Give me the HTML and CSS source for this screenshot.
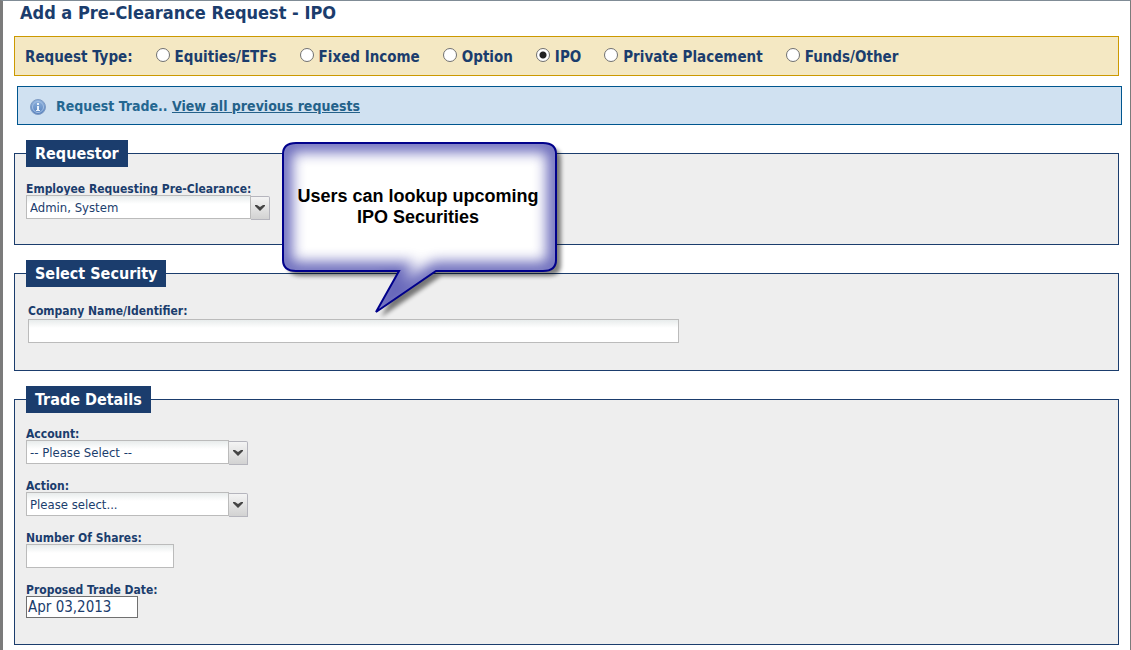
FILE: index.html
```html
<!DOCTYPE html>
<html lang="en">
<head>
	<meta charset="UTF-8" />
	<title>Add a Pre-Clearance Request - IPO</title>
	<link rel="stylesheet" href="styles.css">
</head>
<body>
	<form class="page" onsubmit="return false;">
		<h1>Add a Pre-Clearance Request - IPO</h1>

		<!--request type-->
		<div class="types" role="radiogroup" aria-labelledby="type-title">
			<span class="types-title" id="type-title">Request Type:</span>
			<label><input type="radio" name="type"> Equities/ETFs</label>
			<label><input type="radio" name="type"> Fixed Income</label>
			<label><input type="radio" name="type"> Option</label>
			<label><input type="radio" name="type" checked> IPO</label>
			<label><input type="radio" name="type"> Private Placement</label>
			<label><input type="radio" name="type"> Funds/Other</label>
		</div>

		<div class="info">
			<svg class="info-icon" width="16" height="16" viewBox="0 0 16 16" aria-hidden="true">
				<defs>
					<linearGradient id="ball" x1="0" y1="0" x2="0" y2="1">
						<stop offset="0" stop-color="#8fb3de"/>
						<stop offset="1" stop-color="#5580bd"/>
					</linearGradient>
				</defs>
				<circle cx="8" cy="8" r="7.5" fill="url(#ball)" stroke="#7f9bc4"/>
				<circle cx="8" cy="8" r="5.5" fill="none" stroke="#a5c0e4"/>
				<path d="M7 4h2v2H7zM7 7h2v4h1v1H6v-1h1z" fill="#e8f1fb"/>
			</svg>
			<span>Request Trade.. <a href="#">View all previous requests</a></span>
		</div>

		<fieldset>
			<legend>Requestor</legend>
			<div class="field">
				<label for="employee">Employee Requesting Pre-Clearance:</label>
				<div class="combo">
					<select id="employee" class="wide"><option>Admin, System</option></select>
					<span class="arrow"><svg width="10" height="6" viewBox="0 0 10 6"><path d="M0 0h2l3 2 3-2h2v1L5 6 0 1z"/></svg></span>
				</div>
			</div>
		</fieldset>

		<fieldset>
			<legend>Select Security</legend>
			<div class="field security">
				<label for="company">Company Name/Identifier:</label>
				<input type="text" id="company" class="company">
			</div>
		</fieldset>

		<fieldset>
			<legend>Trade Details</legend>
			<div class="field">
				<label for="account">Account:</label>
				<div class="combo">
					<select id="account"><option>-- Please Select --</option></select>
					<span class="arrow"><svg width="10" height="6" viewBox="0 0 10 6"><path d="M0 0h2l3 2 3-2h2v1L5 6 0 1z"/></svg></span>
				</div>
			</div>
			<div class="field">
				<label for="action">Action:</label>
				<div class="combo">
					<select id="action"><option>Please select...</option></select>
					<span class="arrow"><svg width="10" height="6" viewBox="0 0 10 6"><path d="M0 0h2l3 2 3-2h2v1L5 6 0 1z"/></svg></span>
				</div>
			</div>
			<div class="field">
				<label for="shares">Number Of Shares:</label>
				<input type="text" id="shares" class="shares">
			</div>
			<div class="field">
				<label for="date">Proposed Trade Date:</label>
				<input type="text" id="date" class="date" value="Apr 03,2013">
			</div>
		</fieldset>
	</form>

	<!--help bubble-->
	<div class="callout">
		<svg width="290" height="185" viewBox="0 0 290 185" aria-hidden="true">
			<defs>
				<path id="bubble" d="M15 2H262Q275 2 275 13V119Q275 130 262 130H155L95 171L118 130H15Q2 130 2 119V13Q2 2 15 2Z"/>
				<clipPath id="inside"><use href="#bubble"/></clipPath>
				<filter id="glow" x="-20%" y="-20%" width="140%" height="140%"><feGaussianBlur stdDeviation="7"/></filter>
				<filter id="shade" x="-20%" y="-20%" width="140%" height="140%"><feGaussianBlur stdDeviation="2"/></filter>
			</defs>
			<use href="#bubble" x="5" y="5" fill="#000" opacity=".5" filter="url(#shade)"/>
			<use href="#bubble" fill="#fff"/>
			<g clip-path="url(#inside)">
				<use href="#bubble" fill="none" stroke="#00008b" stroke-width="18" opacity=".6" filter="url(#glow)"/>
			</g>
			<use href="#bubble" fill="none" stroke="#00008b" stroke-width="2"/>
		</svg>
		<p>Users can lookup upcoming<br>IPO Securities</p>
	</div>
</body>
</html>
```

FILE: styles.css
```css
* {
	box-sizing: border-box;
}
body {
	margin: 0;
	position: relative;
	font-family: "DejaVu Sans Condensed", Tahoma, sans-serif;
	font-size: 12px;
	color: #1b3d6d;
	background: #fff;
}
.page {
	min-height: 100vh;
	border: 1px solid #7b7b7b;
	border-top-color: #808c96;
	border-bottom: 0;
	border-left-width: 3px;
	padding: 0 11px 5px;
}
h1 {
	margin: 0 0 11px 6px;
	font-size: 18px;
	line-height: 24px;
}
.types {
	display: flex;
	align-items: center;
	gap: 23px;
	height: 40px;
	padding: 2px 10px 0;
	border: 1px solid #cc9900;
	background: #f4e8c3;
	font-size: 15px;
	font-weight: bold;
	white-space: nowrap;
}
.types label {
	display: flex;
	align-items: center;
	gap: 5px;
}
.types input {
	appearance: none;
	width: 14px;
	height: 14px;
	margin: 0 0 4px;
	border: 1px solid #707070;
	border-radius: 50%;
	background: #fff;
}
.types input:checked {
	background: radial-gradient(circle, #222 3px, #fff 4px);
}
.info {
	display: flex;
	align-items: center;
	gap: 10px;
	height: 39px;
	margin: 10px -3px 15px 3px;
	padding: 0 12px;
	border: 1px solid #00568f;
	background: #d0e1f1;
	font-size: 14px;
	font-weight: bold;
	color: #246791;
}
.info-icon {
	margin-top: 3px;
}
.info a {
	color: #24618a;
}
fieldset {
	min-width: 0;
	margin: 0 0 15px;
	padding: 15px 11px 25px;
	border: 1px solid #1b3d6d;
	background: #eee;
}
fieldset:last-child {
	margin-bottom: 0;
	padding: 14px 11px 24px;
}
legend {
	padding: 0 9px;
	font-size: 16px;
	font-weight: bold;
	line-height: 27px;
	color: #fff;
	background: #1b3d6d;
}
.field {
	height: 37px;
	margin-bottom: 15px;
}
.field:last-child {
	margin-bottom: 0;
}
.field label {
	display: block;
	height: 13px;
	font-weight: bold;
	line-height: 15px;
}
.security {
	height: 43px;
	padding: 2px 2px 0;
}
.security label {
	margin-bottom: 2px;
}
.combo {
	display: flex;
}
select, .field input {
	appearance: none;
	display: block;
	height: 24px;
	margin: 0;
	padding: 0 3px;
	border: 1px solid #bbb;
	border-radius: 0;
	background: linear-gradient(#e8ecec, #fff 8px);
	font-family: inherit;
	font-size: 13px;
	color: #1b3d6d;
}
select {
	width: 203px;
}
select.wide {
	width: 225px;
}
.arrow {
	display: flex;
	align-items: center;
	justify-content: center;
	width: 19px;
	height: 24px;
	margin-top: 1px;
	border: 1px solid #b5b5bd;
	border-left: 0;
	border-radius: 0 2px 0 0;
	background: linear-gradient(#f4f4f4, #d2d2d2);
	fill: #444;
}
.field .company {
	width: 651px;
	max-width: 100%;
}
.field .shares {
	width: 148px;
}
.field .date {
	width: 112px;
	height: 22px;
	padding: 0 1px;
	border-color: #707070;
	background: #fff;
	font-size: 15px;
}
.callout {
	position: absolute;
	left: 281px;
	top: 141px;
	width: 290px;
}
.callout svg {
	display: block;
}
.callout p {
	position: absolute;
	left: 0;
	top: 45px;
	width: 274px;
	margin: 0;
	font-family: "Liberation Sans", Arial, sans-serif;
	font-size: 18px;
	font-weight: bold;
	line-height: 21px;
	text-align: center;
	white-space: nowrap;
	color: #000;
}
```
